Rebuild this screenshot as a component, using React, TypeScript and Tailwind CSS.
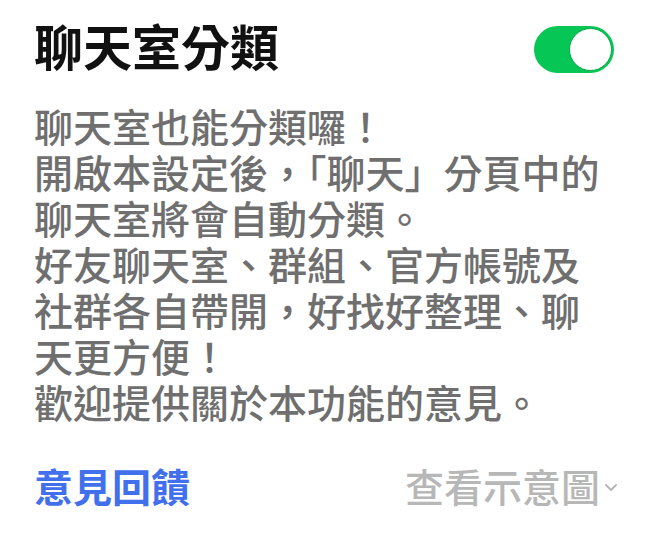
import React from "react";

const font = { fontFamily: '"Noto Sans CJK TC", "Noto Sans", sans-serif' };

export default function App() {
  const lines = [
    "聊天室也能分類囉！",
    "開啟本設定後，「聊天」分頁中的",
    "聊天室將會自動分類。",
    "好友聊天室、群組、官方帳號及",
    "社群各自帶開，好找好整理、聊",
    "天更方便！",
    "歡迎提供關於本功能的意見。",
  ];
  return (
    <div className="w-[656px] h-[543px] bg-white" style={font}>
      <div className="pl-[34px] pr-[36px] pt-[15px]">
        <div className="flex items-start justify-between">
          <div className="text-[49px] leading-[60px] font-bold text-[#111111] whitespace-nowrap">聊天室分類</div>
          <div className="w-[80px] h-[47px] rounded-full bg-[#06c755] flex items-center justify-end pr-[2px] mt-[11px] mr-[6px]">
            <div className="w-[43px] h-[43px] rounded-full bg-white border border-[#04a846]" />
          </div>
        </div>
        <div className="mt-[27px] text-[39px] leading-[46px] font-medium text-[#6f6f6f]">
          {lines.map((l, i) => (
            <div key={i} className="whitespace-nowrap">{l}</div>
          ))}
        </div>
        <div className="mt-[38px] flex items-center justify-between">
          <div className="text-[39px] leading-[46px] font-bold text-[#4270ed] whitespace-nowrap">意見回饋</div>
          <div className="flex items-center text-[39px] leading-[46px] font-medium text-[#b7b7b7] whitespace-nowrap">
            <span>查看示意圖</span>
            <svg width="18" height="18" viewBox="0 0 18 18" className="ml-[2px] mt-[4px]" fill="none" stroke="#b7b7b7" strokeWidth="2" strokeLinecap="round" strokeLinejoin="round">
              <path d="M4 7l5 5 5-5" />
            </svg>
          </div>
        </div>
      </div>
    </div>
  );
}
